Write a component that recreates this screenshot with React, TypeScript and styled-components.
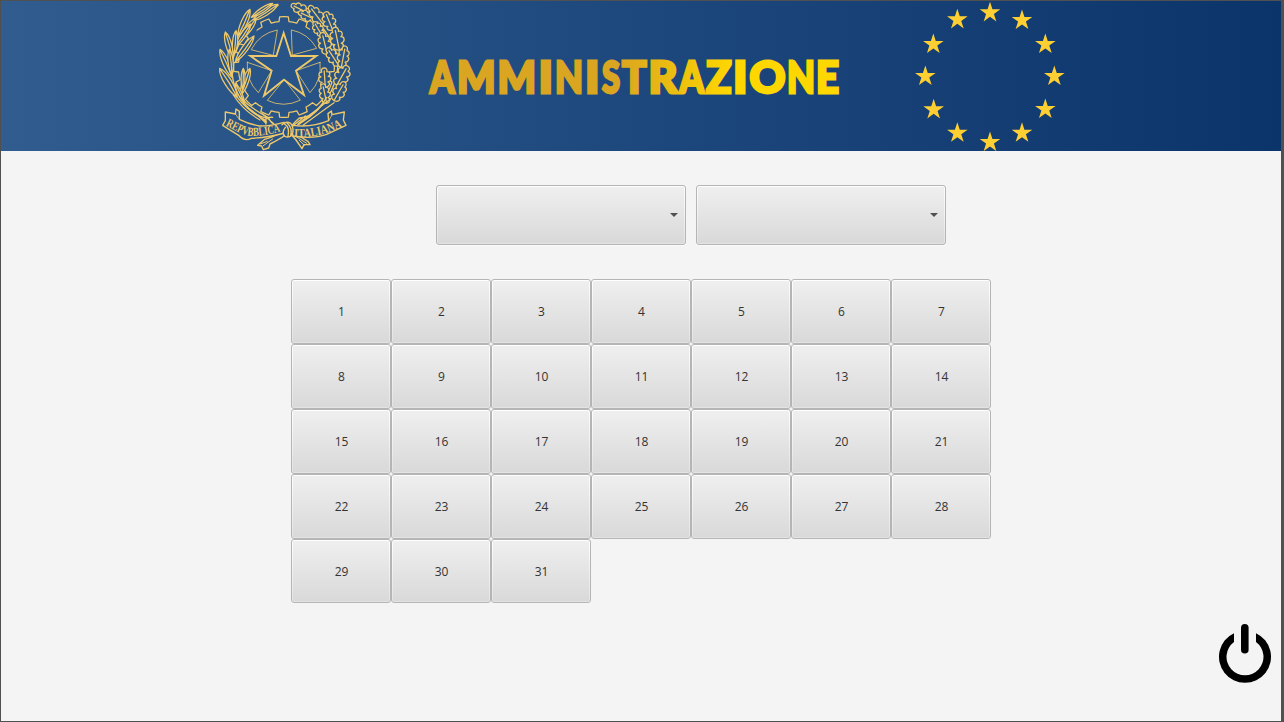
import React from "react";
import styled, { createGlobalStyle } from "styled-components";

const GlobalStyle = createGlobalStyle`
  * { box-sizing: border-box; }
  html, body, #root { height: 100%; }
  body { margin: 0; background: #f4f4f4; overflow: hidden; }
`;

const Window = styled.div`
  width: 1284px;
  height: 722px;
  border: 1px solid #505050;
  border-right-width: 3px;
  background: #f4f4f4;
  display: flex;
  flex-direction: column;
  font-family: "Open Sans", "Noto Sans", sans-serif;
`;

const Header = styled.header`
  height: 150px;
  flex: none;
  display: flex;
  background: linear-gradient(to right, #305c8f, #0b346b);
`;

const EmblemSvg = styled.svg`
  width: 150px;
  height: 150px;
  margin-left: 209px;
  flex: none;
`;

const Title = styled.h1`
  margin: 0 0 0 60px;
  width: 430px;
  height: 150px;
  flex: none;
  font-size: 44px;
  line-height: 1;
`;

const TitleSvg = styled.svg`
  display: block;
  width: 430px;
  height: 150px;
  font: 900 43.5px Lato, sans-serif;
`;

const StarsSvg = styled.svg`
  width: 170px;
  height: 150px;
  margin-left: 55px;
  flex: none;
`;

const Main = styled.main`
  flex: 1;
  display: flex;
  flex-direction: column;
  padding: 34px 10px 0 0;
`;

const Selectors = styled.div`
  display: flex;
  gap: 10px;
  padding-left: 435px;
`;

const surface = `
  border: 1px solid #b5b5b5;
  border-radius: 3px;
  background:
    linear-gradient(to bottom, #efefef, #d9d9d9) 1px 1px / calc(100% - 2px) calc(100% - 2px) no-repeat,
    linear-gradient(to bottom, #ffffff, #e3e3e3);
  background-origin: padding-box;
  background-clip: padding-box;
`;

const Combo = styled.button`
  ${surface}
  width: 250px;
  height: 60px;
  padding: 0 7px 0 0;
  display: flex;
  align-items: center;
  justify-content: flex-end;
  box-shadow: 0 1px 0 #fafafa;
`;

const Arrow = styled.span`
  border: 4px solid transparent;
  border-top-color: #505050;
  border-bottom: 0;
`;

const Calendar = styled.div`
  display: grid;
  grid-template-columns: repeat(7, 100px);
  grid-template-rows: repeat(4, 65px) 64px;
  margin: 34px 0 0 290px;
`;

const Day = styled.button<{ $lastRow: boolean }>`
  ${surface}
  padding: ${({ $lastRow }) => ($lastRow ? "2px" : "0")} 0 0 1px;
  font: 12px/16px "Open Sans", "Noto Sans", sans-serif;
  color: #333333;
`;

const Footer = styled.div`
  display: flex;
  justify-content: flex-end;
  margin-top: 20px;
`;

const PowerButton = styled.button`
  border: 0;
  padding: 0;
  background: none;
  width: 54px;
  height: 62px;
  margin-right: -1px;
`;

const starPoints = (cx: number, cy: number, r: number, ratio = 0.382) =>
  Array.from({ length: 10 }, (_, i) => {
    const a = (i * Math.PI) / 5 - Math.PI / 2;
    const q = i % 2 ? r * ratio : r;
    return `${(cx + q * Math.cos(a)).toFixed(1)},${(cy + q * Math.sin(a)).toFixed(1)}`;
  }).join(" ");

const gearPath = (cx: number, cy: number, outer: number, inner: number, teeth: number) => {
  const step = (Math.PI * 2) / teeth;
  const at = (a: number, r: number) =>
    `${(cx + r * Math.sin(a)).toFixed(1)} ${(cy - r * Math.cos(a)).toFixed(1)}`;
  let d = "";
  for (let i = 0; i < teeth; i++) {
    const a = i * step;
    d += `${i ? "L" : "M"}${at(a - step * 0.28, inner)}L${at(a - step * 0.22, outer)}`;
    d += `A${outer} ${outer} 0 0 1 ${at(a + step * 0.22, outer)}L${at(a + step * 0.28, inner)}`;
    d += `A${inner} ${inner} 0 0 1 ${at(a + step * 0.72, inner)}`;
  }
  return d + "Z";
};

type LeafShape = [number, number, number, number, number];

/* Slender olive leaf with a midrib, from its stem to its tip. */
const leafPath = ([x1, y1, x2, y2, w]: LeafShape) => {
  const len = Math.hypot(x2 - x1, y2 - y1);
  const nx = (-(y2 - y1) / len) * w;
  const ny = ((x2 - x1) / len) * w;
  const p = (t: number, k: number) =>
    `${(x1 + (x2 - x1) * t + nx * k).toFixed(1)} ${(y1 + (y2 - y1) * t + ny * k).toFixed(1)}`;
  return `M${p(0, 0)}C${p(0.25, 0.8)} ${p(0.8, 0.9)} ${p(1, 0)}C${p(0.8, -0.9)} ${p(0.25, -0.8)} ${p(0, 0)}Q${p(0.5, 0.2)} ${p(0.93, 0)}`;
};

/* Oak leaf with rounded lobes on both sides. */
const oakPath = ([x1, y1, x2, y2, w]: LeafShape) => {
  const len = Math.hypot(x2 - x1, y2 - y1);
  const nx = (-(y2 - y1) / len) * w;
  const ny = ((x2 - x1) / len) * w;
  const p = (t: number, k: number) =>
    `${(x1 + (x2 - x1) * t + nx * k).toFixed(1)} ${(y1 + (y2 - y1) * t + ny * k).toFixed(1)}`;
  const side = (s: number) =>
    `M${p(0, 0)}C${p(0.02, s * 0.8)} ${p(0.2, s)} ${p(0.27, s * 0.5)}C${p(0.3, s * 1.2)} ${p(0.52, s * 1.3)} ${p(0.55, s * 0.65)}C${p(0.6, s * 1.1)} ${p(0.8, s * 1.1)} ${p(0.8, s * 0.45)}C${p(0.9, s * 0.6)} ${p(1, s * 0.4)} ${p(1, 0)}`;
  return `${side(1)}${side(-1)}M${p(0, 0)}L${p(0.85, 0)}`;
};

const oliveLeaves: LeafShape[] = [
  [128, 62, 204, 13, 14],
  [124, 52, 188, 10, 11],
  [84, 108, 120, 28, 14],
  [88, 122, 138, 55, 15],
  [76, 140, 122, 72, 12],
  [68, 178, 46, 96, 14],
  [72, 165, 78, 92, 12],
  [76, 185, 132, 108, 14],
  [66, 232, 30, 148, 14],
  [66, 226, 58, 148, 12],
  [82, 292, 29, 205, 17],
  [92, 286, 120, 205, 14],
  [98, 270, 100, 205, 9],
  [104, 312, 76, 250, 9],
];

const oakLeaves: LeafShape[] = [
  [300, 42, 244, 14, 15],
  [318, 60, 266, 36, 14],
  [342, 76, 298, 18, 17],
  [336, 106, 312, 66, 14],
  [368, 90, 346, 36, 18],
  [352, 162, 336, 98, 18],
  [388, 150, 374, 82, 19],
  [386, 196, 352, 144, 16],
  [394, 202, 406, 138, 16],
  [380, 256, 413, 198, 20],
  [346, 262, 342, 204, 17],
  [372, 302, 404, 246, 17],
  [350, 310, 338, 252, 15],
];

const Emblem = () => (
  <EmblemSvg viewBox="0 3 450 450" aria-label="Repubblica Italiana">
    <g fill="none" stroke="#efc969" strokeWidth="3.8" strokeLinejoin="round" strokeLinecap="round">
      <path d={gearPath(222, 201, 151, 137, 16)} clipPath="url(#gearWindow)" />
      <g strokeWidth="2.4">
        <path d="M124 148A112 112 0 0 1 202 90L190 165Z" />
        <path d="M245 90A112 112 0 0 1 320 145L248 165Z" />
        <path d="M112 187L185 212L145 278A112 112 0 0 1 112 187Z" />
        <path d="M330 187L258 212L300 278A112 112 0 0 0 330 187Z" />
        <path d="M222 239L172 301A112 112 0 0 0 270 301Z" />
      </g>
      <polygon
        fill="#285488"
        strokeWidth="5.5"
        strokeLinejoin="miter"
        points="221,99 243,168 319,168 258,212 282,285 222,239 162,287 185,212 121,168 199,168"
      />
      <g fill="#285488">
        <path d="M204 16Q120 48 78 145Q42 248 116 325L170 366" strokeWidth="4" fill="none" />
        {oliveLeaves.map((l, i) => (
          <path key={i} d={leafPath(l)} />
        ))}
        <path d="M266 28Q364 80 384 180Q386 280 300 350L220 405" strokeWidth="4" fill="none" />
        {oakLeaves.map((l, i) => (
          <path key={i} d={oakPath(l)} />
        ))}
      </g>
      <path d="M82 292Q112 332 168 362M92 292Q122 326 178 354M70 285Q100 332 150 360M364 295Q320 330 268 368M372 308Q330 338 280 375M350 292Q330 326 300 345" />
      <path d="M112 322Q140 350 176 356Q184 370 196 376M146 348l22 22M158 342l34 30M168 372Q160 350 188 352M326 326Q300 352 268 354Q254 366 246 376M300 348l-36 24M286 348l-38 30" strokeWidth="4" />
      <g fill="#285488" strokeWidth="4.2">
        <path d="M240 382Q200 408 164 418L143 436L155 438L160 449L176 444L180 432Q222 412 250 388Z" />
        <path d="M205 382Q240 396 258 420L276 446L282 434L300 434L294 424Q266 410 248 386Z" />
        <path d="M46 336L76 342L78 327L88 334L88 358Q116 372 148 378Q186 378 222 367L232 376L224 399Q178 412 124 415Q104 426 86 406L38 376L46 362Z" />
        <path d="M403 336L366 344L364 333L354 341L356 362Q302 384 250 376L240 384L250 408Q308 418 350 403L408 376L400 360Z" />
        <path d="M76 342L88 358M366 344L356 362" strokeWidth="2.5" />
        <path d="M216 374Q228 362 242 370Q254 386 246 404Q234 416 224 408Q214 398 226 382M224 372Q240 382 234 409M232 370Q248 384 242 408" />
      </g>
      <path d="M160 437L188 417M151 432L172 424M268 421L284 436M256 408L290 430" strokeWidth="3" />
    </g>
    <defs>
      <clipPath id="gearWindow">
        <path d="M140 20H300V150H450V453H0V100H140Z" />
      </clipPath>
      <path id="ribbonLeft" d="M46 377C76 390 96 408 132 408Q176 406 222 391" />
      <path id="ribbonRight" d="M252 411Q324 416 402 377" />
    </defs>
    <g fill="#efc969" fontFamily="Liberation Serif, serif" fontWeight="700" fontSize="37">
      <text>
        <textPath href="#ribbonLeft" textLength="174" lengthAdjust="spacingAndGlyphs">
          REPVBBLICA
        </textPath>
      </text>
      <text>
        <textPath href="#ribbonRight" textLength="150" lengthAdjust="spacingAndGlyphs">
          ITALIANA
        </textPath>
      </text>
    </g>
  </EmblemSvg>
);

/* Letter, left edge and advance width of each glyph of the title. */
const titleLetters: [string, number, number][] = [
  ["A", 10, 24.5],
  ["M", 37, 38.5],
  ["M", 77.5, 38.5],
  ["I", 118.5, 14.5],
  ["N", 135, 28],
  ["I", 165, 14.5],
  ["S", 182, 18],
  ["T", 202, 24.5],
  ["R", 228.5, 29],
  ["A", 259.5, 24.5],
  ["Z", 286, 25.5],
  ["I", 313, 14.5],
  ["O", 329.5, 36],
  ["N", 367, 28],
  ["E", 396, 23],
];

const stars: [number, number][] = [
  [255, 7], [351, 30], [421, 102], [448, 198], [421, 297], [351, 368],
  [255, 396], [157, 368], [86, 298], [61, 198], [85, 102], [157, 28],
];

export default function App() {
  return (
    <>
      <GlobalStyle />
      <Window>
        <Header>
          <Emblem />
          <Title>
            <TitleSvg viewBox="0 0 430 150">
              <defs>
                <linearGradient id="gold" gradientUnits="userSpaceOnUse" x1="9" x2="419" y1="0" y2="0">
                  <stop offset="0.46" stopColor="#daa520" />
                  <stop offset="0.74" stopColor="#ffd700" />
                </linearGradient>
              </defs>
              <text
                y="91.5"
                fill="url(#gold)"
                stroke="url(#gold)"
                strokeWidth="2.8"
                strokeLinejoin="miter"
                strokeMiterlimit="2"
              >
                {titleLetters.map(([ch, x, w], i) => (
                  <tspan key={i} x={x} textLength={w} lengthAdjust="spacingAndGlyphs">
                    {ch}
                  </tspan>
                ))}
              </text>
            </TitleSvg>
          </Title>
          <StarsSvg viewBox="0 3 510 450" aria-label="Unione Europea">
            {stars.map(([x, y]) => (
              <polygon key={`${x}-${y}`} fill="#fecf32" points={starPoints(x, y + 31, 32.5)} />
            ))}
          </StarsSvg>
        </Header>
        <Main>
          <Selectors>
            <Combo aria-label="Mese">
              <Arrow />
            </Combo>
            <Combo aria-label="Anno">
              <Arrow />
            </Combo>
          </Selectors>
          <Calendar>
            {Array.from({ length: 31 }, (_, i) => (
              <Day key={i} $lastRow={i >= 28}>
                {i + 1}
              </Day>
            ))}
          </Calendar>
          <Footer>
            <PowerButton aria-label="Esci">
              <svg width="54" height="62" viewBox="1218 623 54 62">
                <path d="M1234 633.2A26 26 0 1 0 1256 633.2V641.9A18.5 18.5 0 1 1 1234 641.9Z" />
                <rect x="1241" y="624" width="7.6" height="29.5" rx="3.8" />
              </svg>
            </PowerButton>
          </Footer>
        </Main>
      </Window>
    </>
  );
}
